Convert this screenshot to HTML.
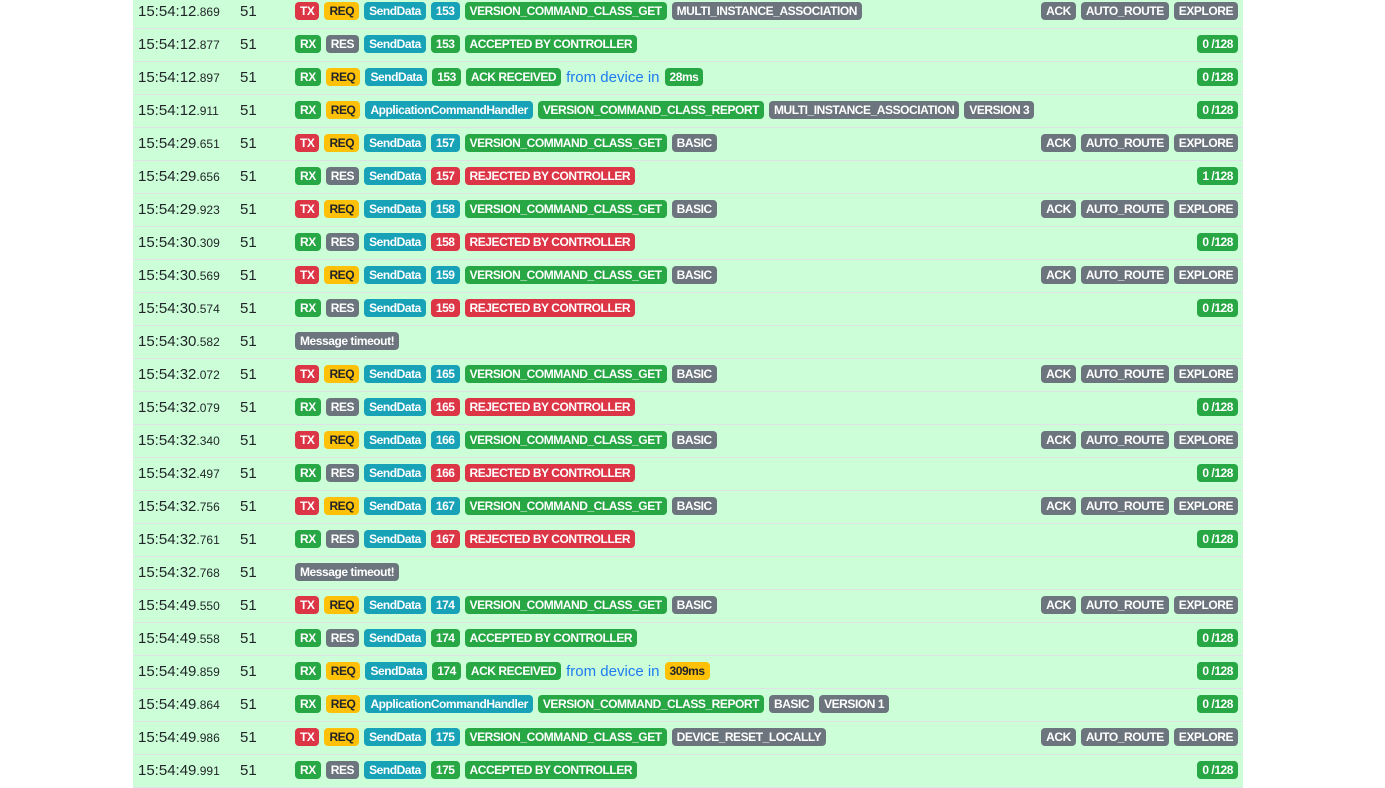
<!DOCTYPE html>
<html><head><meta charset="utf-8"><style>
body{margin:0;background:#fff;width:1385px;height:763px;overflow:hidden;font-family:"Liberation Sans",sans-serif;}
.wrap{position:absolute;left:133px;top:-4px;width:1110px;background:#ccffd8;}
.r{height:32px;border-bottom:1px solid #dee2e6;display:flex;align-items:center;position:relative;}
.t{position:absolute;left:5px;top:7px;font-size:15px;color:#212529;}
.t small{font-size:12px;}
.n{position:absolute;left:107px;top:7px;font-size:15px;color:#212529;}
.b{position:absolute;left:162px;right:5px;top:6px;display:flex;gap:5px;align-items:center;}
.k{display:inline-block;height:18px;line-height:18px;padding:0 5px;border-radius:4px;font-size:12px;font-weight:bold;color:#fff;white-space:nowrap;letter-spacing:-0.45px;}
.red{background:#dc3545}.y{background:#ffc107;color:#212529}.c{background:#17a2b8}.g{background:#28a745}.s{background:#6c757d}
.f{color:#1e7cf0;font-size:15px;}
.rt{margin-left:auto;display:flex;gap:5px;}
</style></head><body><div class="wrap">
<div class="r"><span class="t">15:54:12<small>.869</small></span><span class="n">51</span><div class="b"><span class="k red">TX</span><span class="k y">REQ</span><span class="k c">SendData</span><span class="k c">153</span><span class="k g">VERSION_COMMAND_CLASS_GET</span><span class="k s">MULTI_INSTANCE_ASSOCIATION</span><span class="rt"><span class="k s">ACK</span><span class="k s">AUTO_ROUTE</span><span class="k s">EXPLORE</span></span></div></div>
<div class="r"><span class="t">15:54:12<small>.877</small></span><span class="n">51</span><div class="b"><span class="k g">RX</span><span class="k s">RES</span><span class="k c">SendData</span><span class="k g">153</span><span class="k g">ACCEPTED BY CONTROLLER</span><span class="rt"><span class="k g">0 /128</span></span></div></div>
<div class="r"><span class="t">15:54:12<small>.897</small></span><span class="n">51</span><div class="b"><span class="k g">RX</span><span class="k y">REQ</span><span class="k c">SendData</span><span class="k g">153</span><span class="k g">ACK RECEIVED</span><span class="f">from device in</span><span class="k g">28ms</span><span class="rt"><span class="k g">0 /128</span></span></div></div>
<div class="r"><span class="t">15:54:12<small>.911</small></span><span class="n">51</span><div class="b"><span class="k g">RX</span><span class="k y">REQ</span><span class="k c">ApplicationCommandHandler</span><span class="k g">VERSION_COMMAND_CLASS_REPORT</span><span class="k s">MULTI_INSTANCE_ASSOCIATION</span><span class="k s">VERSION 3</span><span class="rt"><span class="k g">0 /128</span></span></div></div>
<div class="r"><span class="t">15:54:29<small>.651</small></span><span class="n">51</span><div class="b"><span class="k red">TX</span><span class="k y">REQ</span><span class="k c">SendData</span><span class="k c">157</span><span class="k g">VERSION_COMMAND_CLASS_GET</span><span class="k s">BASIC</span><span class="rt"><span class="k s">ACK</span><span class="k s">AUTO_ROUTE</span><span class="k s">EXPLORE</span></span></div></div>
<div class="r"><span class="t">15:54:29<small>.656</small></span><span class="n">51</span><div class="b"><span class="k g">RX</span><span class="k s">RES</span><span class="k c">SendData</span><span class="k red">157</span><span class="k red">REJECTED BY CONTROLLER</span><span class="rt"><span class="k g">1 /128</span></span></div></div>
<div class="r"><span class="t">15:54:29<small>.923</small></span><span class="n">51</span><div class="b"><span class="k red">TX</span><span class="k y">REQ</span><span class="k c">SendData</span><span class="k c">158</span><span class="k g">VERSION_COMMAND_CLASS_GET</span><span class="k s">BASIC</span><span class="rt"><span class="k s">ACK</span><span class="k s">AUTO_ROUTE</span><span class="k s">EXPLORE</span></span></div></div>
<div class="r"><span class="t">15:54:30<small>.309</small></span><span class="n">51</span><div class="b"><span class="k g">RX</span><span class="k s">RES</span><span class="k c">SendData</span><span class="k red">158</span><span class="k red">REJECTED BY CONTROLLER</span><span class="rt"><span class="k g">0 /128</span></span></div></div>
<div class="r"><span class="t">15:54:30<small>.569</small></span><span class="n">51</span><div class="b"><span class="k red">TX</span><span class="k y">REQ</span><span class="k c">SendData</span><span class="k c">159</span><span class="k g">VERSION_COMMAND_CLASS_GET</span><span class="k s">BASIC</span><span class="rt"><span class="k s">ACK</span><span class="k s">AUTO_ROUTE</span><span class="k s">EXPLORE</span></span></div></div>
<div class="r"><span class="t">15:54:30<small>.574</small></span><span class="n">51</span><div class="b"><span class="k g">RX</span><span class="k s">RES</span><span class="k c">SendData</span><span class="k red">159</span><span class="k red">REJECTED BY CONTROLLER</span><span class="rt"><span class="k g">0 /128</span></span></div></div>
<div class="r"><span class="t">15:54:30<small>.582</small></span><span class="n">51</span><div class="b"><span class="k s">Message timeout!</span></div></div>
<div class="r"><span class="t">15:54:32<small>.072</small></span><span class="n">51</span><div class="b"><span class="k red">TX</span><span class="k y">REQ</span><span class="k c">SendData</span><span class="k c">165</span><span class="k g">VERSION_COMMAND_CLASS_GET</span><span class="k s">BASIC</span><span class="rt"><span class="k s">ACK</span><span class="k s">AUTO_ROUTE</span><span class="k s">EXPLORE</span></span></div></div>
<div class="r"><span class="t">15:54:32<small>.079</small></span><span class="n">51</span><div class="b"><span class="k g">RX</span><span class="k s">RES</span><span class="k c">SendData</span><span class="k red">165</span><span class="k red">REJECTED BY CONTROLLER</span><span class="rt"><span class="k g">0 /128</span></span></div></div>
<div class="r"><span class="t">15:54:32<small>.340</small></span><span class="n">51</span><div class="b"><span class="k red">TX</span><span class="k y">REQ</span><span class="k c">SendData</span><span class="k c">166</span><span class="k g">VERSION_COMMAND_CLASS_GET</span><span class="k s">BASIC</span><span class="rt"><span class="k s">ACK</span><span class="k s">AUTO_ROUTE</span><span class="k s">EXPLORE</span></span></div></div>
<div class="r"><span class="t">15:54:32<small>.497</small></span><span class="n">51</span><div class="b"><span class="k g">RX</span><span class="k s">RES</span><span class="k c">SendData</span><span class="k red">166</span><span class="k red">REJECTED BY CONTROLLER</span><span class="rt"><span class="k g">0 /128</span></span></div></div>
<div class="r"><span class="t">15:54:32<small>.756</small></span><span class="n">51</span><div class="b"><span class="k red">TX</span><span class="k y">REQ</span><span class="k c">SendData</span><span class="k c">167</span><span class="k g">VERSION_COMMAND_CLASS_GET</span><span class="k s">BASIC</span><span class="rt"><span class="k s">ACK</span><span class="k s">AUTO_ROUTE</span><span class="k s">EXPLORE</span></span></div></div>
<div class="r"><span class="t">15:54:32<small>.761</small></span><span class="n">51</span><div class="b"><span class="k g">RX</span><span class="k s">RES</span><span class="k c">SendData</span><span class="k red">167</span><span class="k red">REJECTED BY CONTROLLER</span><span class="rt"><span class="k g">0 /128</span></span></div></div>
<div class="r"><span class="t">15:54:32<small>.768</small></span><span class="n">51</span><div class="b"><span class="k s">Message timeout!</span></div></div>
<div class="r"><span class="t">15:54:49<small>.550</small></span><span class="n">51</span><div class="b"><span class="k red">TX</span><span class="k y">REQ</span><span class="k c">SendData</span><span class="k c">174</span><span class="k g">VERSION_COMMAND_CLASS_GET</span><span class="k s">BASIC</span><span class="rt"><span class="k s">ACK</span><span class="k s">AUTO_ROUTE</span><span class="k s">EXPLORE</span></span></div></div>
<div class="r"><span class="t">15:54:49<small>.558</small></span><span class="n">51</span><div class="b"><span class="k g">RX</span><span class="k s">RES</span><span class="k c">SendData</span><span class="k g">174</span><span class="k g">ACCEPTED BY CONTROLLER</span><span class="rt"><span class="k g">0 /128</span></span></div></div>
<div class="r"><span class="t">15:54:49<small>.859</small></span><span class="n">51</span><div class="b"><span class="k g">RX</span><span class="k y">REQ</span><span class="k c">SendData</span><span class="k g">174</span><span class="k g">ACK RECEIVED</span><span class="f">from device in</span><span class="k y">309ms</span><span class="rt"><span class="k g">0 /128</span></span></div></div>
<div class="r"><span class="t">15:54:49<small>.864</small></span><span class="n">51</span><div class="b"><span class="k g">RX</span><span class="k y">REQ</span><span class="k c">ApplicationCommandHandler</span><span class="k g">VERSION_COMMAND_CLASS_REPORT</span><span class="k s">BASIC</span><span class="k s">VERSION 1</span><span class="rt"><span class="k g">0 /128</span></span></div></div>
<div class="r"><span class="t">15:54:49<small>.986</small></span><span class="n">51</span><div class="b"><span class="k red">TX</span><span class="k y">REQ</span><span class="k c">SendData</span><span class="k c">175</span><span class="k g">VERSION_COMMAND_CLASS_GET</span><span class="k s">DEVICE_RESET_LOCALLY</span><span class="rt"><span class="k s">ACK</span><span class="k s">AUTO_ROUTE</span><span class="k s">EXPLORE</span></span></div></div>
<div class="r"><span class="t">15:54:49<small>.991</small></span><span class="n">51</span><div class="b"><span class="k g">RX</span><span class="k s">RES</span><span class="k c">SendData</span><span class="k g">175</span><span class="k g">ACCEPTED BY CONTROLLER</span><span class="rt"><span class="k g">0 /128</span></span></div></div>
</div></body></html>
